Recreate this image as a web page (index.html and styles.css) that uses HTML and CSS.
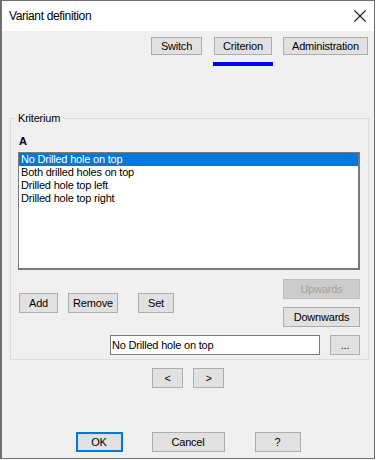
FILE: index.html
```html
<!DOCTYPE html>
<html lang="en">
<head>
  <meta charset="UTF-8" />
  <title>Variant definition</title>
  <link rel="stylesheet" href="styles.css">
</head>
<body>
  <div class="window">
    <div class="titlebar">
      <span class="title">Variant definition</span>
      <svg class="close" width="12" height="12" viewBox="0 0 12 12">
        <path d="M0.5 0.5 L11.5 11.5 M11.5 0.5 L0.5 11.5" stroke="#1a1a1a" stroke-width="1.1" fill="none" />
      </svg>
    </div>

    <div class="content">
      <!-- Tabs -->
      <div class="tabs">
        <div class="tab"><button class="btn tab-switch">Switch</button></div>
        <div class="tab active"><button class="btn tab-criterion">Criterion</button><span class="tab-bar"></span></div>
        <div class="tab"><button class="btn tab-admin">Administration</button></div>
      </div>

      <!-- Kriterium -->
      <fieldset class="group">
        <legend>Kriterium</legend>
        <div class="group-inner">
          <div class="col-label">A</div>
          <ul class="listbox">
            <li class="selected">No Drilled hole on top</li>
            <li>Both drilled holes on top</li>
            <li>Drilled hole top left</li>
            <li>Drilled hole top right</li>
          </ul>

          <div class="controls">
            <div class="edit-buttons">
              <button class="btn btn-add">Add</button>
              <button class="btn btn-remove">Remove</button>
              <button class="btn btn-set">Set</button>
            </div>
            <div class="move-buttons">
              <button class="btn btn-move" disabled>Upwards</button>
              <button class="btn btn-move">Downwards</button>
            </div>
          </div>

          <div class="value-row">
            <input class="value" type="text" value="No Drilled hole on top" />
            <button class="btn btn-more">...</button>
          </div>
        </div>
      </fieldset>

      <div class="nav">
        <button class="btn btn-nav">&lt;</button>
        <button class="btn btn-nav">&gt;</button>
      </div>

      <div class="dialog-buttons">
        <button class="btn btn-ok">OK</button>
        <button class="btn btn-cancel">Cancel</button>
        <button class="btn btn-help">?</button>
      </div>
    </div>
  </div>
</body>
</html>
```

FILE: styles.css
```css
body {
  margin: 0;
  background-color: #fff;
  font-family: 'Liberation Sans', Arial, sans-serif;
  font-size: 11px;
  letter-spacing: -0.2px;
  color: #000;
}

.window {
  width: 375px;
  height: 459px;
  box-sizing: border-box;
  border: 1px solid #6f6f6f;
  border-left-width: 2px;
  background-color: #f0f0f0;
  display: flex;
  flex-direction: column;
}

.titlebar {
  height: 30px;
  background-color: #fff;
  display: flex;
  align-items: center;
  justify-content: space-between;
  padding: 0 8px 0 7px;
}

.title {
  font-size: 12px;
  letter-spacing: -0.35px;
}

.close {
  display: block;
  margin-top: -1px;
}

/* buttons */
.btn {
  font: inherit;
  letter-spacing: inherit;
  color: #000;
  background-color: #e1e1e1;
  border: 1px solid #adadad;
  padding: 0;
  height: 20px;
  box-sizing: border-box;
  margin: 0;
}

.btn:disabled {
  color: #a0a0a0;
  background-color: #cccccc;
  border-color: #bfbfbf;
}

/* tabs */
.tabs {
  display: flex;
  justify-content: flex-end;
  align-items: flex-start;
  gap: 10px;
  padding: 6px 6px 0 0;
}

.tab {
  display: flex;
  flex-direction: column;
  align-items: center;
}

.tabs .btn {
  height: 18px;
}

.tab-switch { width: 51px; margin-right: 1px; }
.tab-criterion { width: 58px; }
.tab-admin { width: 85px; }

.tab-bar {
  width: 60px;
  height: 4px;
  margin-top: 7px;
  background-color: #0000ff;
}

/* group box */
.group {
  width: 359px;
  box-sizing: border-box;
  margin: 46px 0 0 8px;
  padding: 0 0 4px 0;
  border: 1px solid #dcdcdc;
  min-width: 0;
}

.group legend {
  margin-left: 5px;
  padding: 0 2px;
  line-height: 13px;
}

.group-inner {
  padding: 0 8px 0 7px;
}

.col-label {
  font-weight: bold;
  line-height: 13px;
  margin-top: 10px;
  padding-left: 1px;
}

.listbox {
  list-style: none;
  margin: 4px 0 0 0;
  padding: 0;
  height: 118px;
  box-sizing: border-box;
  background-color: #fff;
  border: 1px solid #7a7a7a;
  border-right-width: 2px;
  border-bottom-width: 2px;
}

.listbox li {
  line-height: 13px;
  padding-left: 2px;
}

.listbox li.selected {
  background-color: #0078d7;
  color: #fff;
}

.controls {
  display: flex;
  justify-content: space-between;
  align-items: center;
  margin-top: 9px;
}

.edit-buttons {
  display: flex;
  gap: 10px;
  padding-left: 1px;
}

.btn-add { width: 39px; }
.btn-remove { width: 50px; }
.btn-set { width: 36px; margin-left: 10px; }

.move-buttons {
  display: flex;
  flex-direction: column;
  gap: 8px;
}

.btn-move { width: 77px; }

.value-row {
  display: flex;
  justify-content: flex-end;
  gap: 10px;
  margin-top: 8px;
}

.value {
  width: 210px;
  height: 20px;
  box-sizing: border-box;
  border: 1px solid #7a7a7a;
  padding: 0 1px;
  font: inherit;
  letter-spacing: inherit;
  background-color: #fff;
  outline: none;
}

.btn-more { width: 30px; }

/* navigation + dialog buttons */
.nav {
  display: flex;
  justify-content: center;
  gap: 10px;
  margin-top: 8px;
}

.btn-nav { width: 31px; }

.dialog-buttons {
  display: flex;
  justify-content: center;
  gap: 29px;
  margin-top: 44px;
}

.btn-ok {
  width: 47px;
  border: 2px solid #0078d7;
}

.btn-cancel { width: 73px; }
.btn-help { width: 46px; margin-left: 1px; }
```
